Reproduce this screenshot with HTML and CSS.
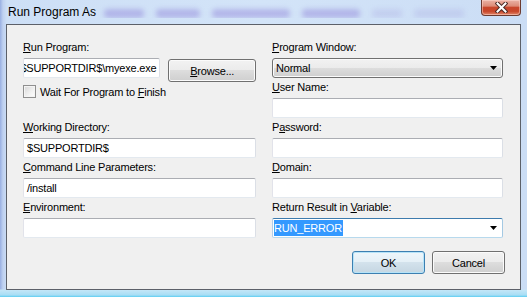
FILE: index.html
```html
<!DOCTYPE html>
<html lang="en">
<head>
    <meta charset="UTF-8">
    <title>Run Program As</title>
    <link rel="stylesheet" href="styles.css">
</head>
<body>
    <div class="window">
        <div class="titlebar">
            <span class="title">Run Program As</span>
            <div class="backdrop">
                <span class="blob" style="width: 40px"></span>
                <span class="blob" style="width: 44px"></span>
                <span class="blob" style="width: 78px"></span>
                <span class="blob" style="width: 58px"></span>
                <span class="blob faint" style="width: 30px"></span>
                <span class="blob faint" style="width: 50px"></span>
            </div>
            <span class="close-btn">
                <svg width="13" height="11" viewBox="0 0 13 11">
                    <path d="M2.5 1.5 L10.5 9.5 M10.5 1.5 L2.5 9.5" stroke="#4a2a26" stroke-width="4" stroke-linecap="square"/>
                    <path d="M2.5 1.5 L10.5 9.5 M10.5 1.5 L2.5 9.5" stroke="#ffffff" stroke-width="2" stroke-linecap="square"/>
                </svg>
            </span>
        </div>

        <div class="client">
            <div class="fields">
                <div class="field">
                    <label class="label"><u>R</u>un Program:</label>
                    <div class="input-row">
                        <div class="textbox scrolled"><span>$SUPPORTDIR$\myexe.exe</span></div>
                        <button class="button browse"><u>B</u>rowse...</button>
                    </div>
                </div>
                <div class="field">
                    <label class="label"><u>P</u>rogram Window:</label>
                    <div class="dropdown">
                        <span>Normal</span>
                        <svg class="arrow" width="7" height="4" viewBox="0 0 7 4"><polygon points="0,0 7,0 3.5,4" fill="#000"/></svg>
                    </div>
                </div>

                <div class="check-field">
                    <span class="checkbox"></span>
                    <span>Wait For Program to <u>F</u>inish</span>
                </div>
                <div class="field">
                    <label class="label"><u>U</u>ser Name:</label>
                    <div class="textbox"></div>
                </div>

                <div class="field">
                    <label class="label"><u>W</u>orking Directory:</label>
                    <div class="textbox">$SUPPORTDIR$</div>
                </div>
                <div class="field">
                    <label class="label">P<u>a</u>ssword:</label>
                    <div class="textbox"></div>
                </div>

                <div class="field">
                    <label class="label"><u>C</u>ommand Line Parameters:</label>
                    <div class="textbox">/install</div>
                </div>
                <div class="field">
                    <label class="label"><u>D</u>omain:</label>
                    <div class="textbox"></div>
                </div>

                <div class="field">
                    <label class="label"><u>E</u>nvironment:</label>
                    <div class="textbox"></div>
                </div>
                <div class="field">
                    <label class="label">Return Result in <u>V</u>ariable:</label>
                    <div class="textbox combo focused">
                        <span class="selection">RUN_ERROR</span>
                        <svg class="arrow" width="7" height="4" viewBox="0 0 7 4"><polygon points="0,0 7,0 3.5,4" fill="#000"/></svg>
                    </div>
                </div>
            </div>

            <div class="actions">
                <button class="button default">OK</button>
                <button class="button">Cancel</button>
            </div>
        </div>
    </div>
</body>
</html>
```

FILE: styles.css
```css
* {
    margin: 0;
    padding: 0;
    box-sizing: border-box;
}

body {
    width: 527px;
    height: 297px;
    overflow: hidden;
    font-family: "Liberation Sans", Arial, sans-serif;
    font-size: 11px;
    letter-spacing: -0.2px;
    color: #000;
}

.window {
    height: 297px;
    display: flex;
    flex-direction: column;
    padding: 0 6px 7px 6px;
    background:
        linear-gradient(180deg, transparent 289px, #c4e6f7 290px, #a8def5 295px, #5ccdf2 297px),
        linear-gradient(90deg, #98afe2 0, #bfd1f0 3px, #cddff6 7px, #d3e4f8 50%, #cbddf5 100%);
}

.titlebar {
    height: 24px;
    display: flex;
    align-items: flex-start;
    overflow: hidden;
}

.title {
    font-size: 12px;
    letter-spacing: 0;
    line-height: 15px;
    padding: 5px 0 0 2px;
    white-space: nowrap;
}

/* blurred stuff behind the glass */
.backdrop {
    flex: 1;
    display: flex;
    gap: 12px;
    padding: 9px 0 0 8px;
    overflow: hidden;
}

.blob {
    height: 9px;
    flex-shrink: 0;
    border-radius: 4px;
    background-color: rgba(130, 110, 210, 0.38);
    filter: blur(2.5px);
}

.blob.faint {
    background-color: rgba(150, 140, 215, 0.2);
}

.close-btn {
    width: 40px;
    height: 16px;
    flex-shrink: 0;
    display: flex;
    justify-content: center;
    align-items: center;
    border: 1px solid #6b3a30;
    border-top: none;
    border-radius: 0 0 4px 4px;
    background: linear-gradient(180deg, #eab3a6 0%, #dd8c78 40%, #c9472c 50%, #c8462a 75%, #e0866a 100%);
    box-shadow: inset 0 0 0 1px rgba(255, 220, 210, 0.5);
}

.client {
    flex: 1;
    border: 1px solid #5c6069;
    background-color: #f0f0f0;
    padding: 16px 15px 0 16px;
}

.fields {
    display: grid;
    grid-template-columns: 233px 231px;
    grid-auto-rows: 37px;
    column-gap: 16px;
    row-gap: 3px;
}

.field {
    display: flex;
    flex-direction: column;
    gap: 4px;
}

.label {
    display: block;
    line-height: 13px;
    white-space: nowrap;
}

.textbox {
    height: 20px;
    display: flex;
    align-items: center;
    padding: 0 3px;
    background-color: white;
    border: 1px solid;
    border-color: #abadb3 #dbdfe6 #e3e9ef #e2e3ea;
    border-radius: 2px;
    white-space: nowrap;
    overflow: hidden;
}

.textbox.scrolled {
    width: 138px;
    justify-content: flex-end;
}

.textbox.focused {
    border-color: #3d7bad #a4c9e3 #b7d9ed #b5cfe7;
}

.combo {
    padding: 0 5px 0 1px;
    justify-content: space-between;
}

.selection {
    background-color: #3399ff;
    color: white;
    line-height: 16px;
    padding-right: 1px;
}

.input-row {
    display: flex;
    gap: 8px;
    align-items: flex-start;
}

.button {
    height: 23px;
    width: 73px;
    font-family: inherit;
    font-size: 11px;
    letter-spacing: -0.2px;
    color: #000;
    border: 1px solid #707070;
    border-radius: 3px;
    background: linear-gradient(180deg, #f2f2f2 0%, #ebebeb 50%, #dddddd 50%, #cfcfcf 100%);
    box-shadow: inset 0 0 0 1px #fbfbfb;
}

.button.browse {
    width: 88px;
    margin-top: 1px;
}

.button.default {
    border-color: #3c7fb1;
    background: linear-gradient(180deg, #eef6fb 0%, #e4eff6 50%, #d3e2ec 50%, #c5d6e2 100%);
    box-shadow: inset 0 0 0 1px #b6e3f8;
}

.dropdown {
    height: 20px;
    display: flex;
    align-items: center;
    justify-content: space-between;
    padding: 0 5px 0 3px;
    border: 1px solid #707070;
    border-radius: 3px;
    background: linear-gradient(180deg, #f2f2f2 0%, #ebebeb 50%, #dddddd 50%, #cfcfcf 100%);
    box-shadow: inset 0 0 0 1px #fbfbfb;
}

.check-field {
    display: flex;
    align-items: center;
    gap: 4px;
    padding-top: 4px;
    height: 17px;
    white-space: nowrap;
}

.checkbox {
    width: 13px;
    height: 13px;
    flex-shrink: 0;
    border: 1px solid #8f8f8f;
    background: linear-gradient(135deg, #d6d6d6 0%, #f2f2f2 60%, #ffffff 100%);
    box-shadow: inset 0 0 0 1px #f4f4f4;
}

.actions {
    display: flex;
    justify-content: flex-end;
    gap: 7px;
    margin-top: 13px;
}
```
